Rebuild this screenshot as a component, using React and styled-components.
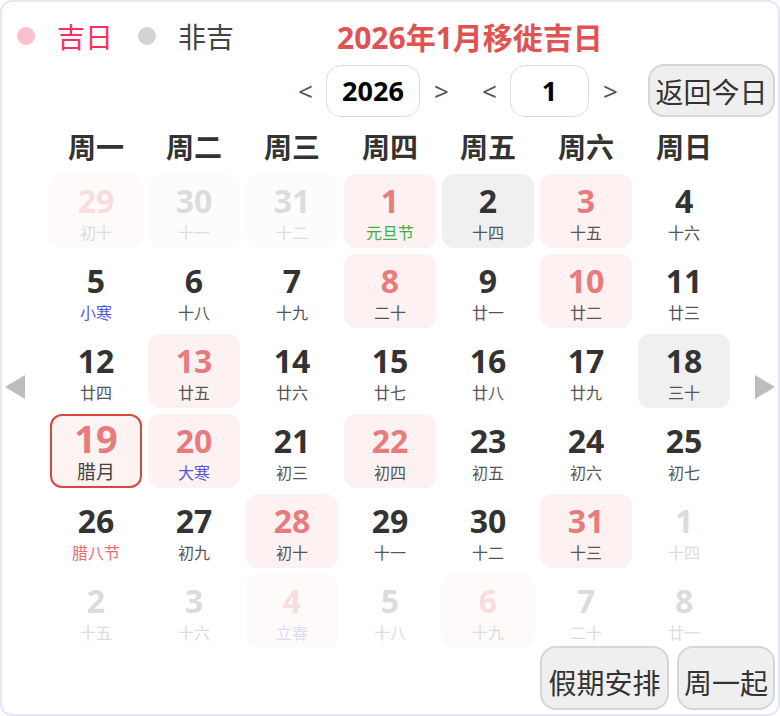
import styled, { createGlobalStyle } from "styled-components";

const GlobalStyle = createGlobalStyle`
  body {
    margin: 0;
    background: #fff;
    font-family: "Noto Sans", "Noto Sans CJK SC", sans-serif;
  }
`;

const prev = [
  { d: 29, l: "初十", kind: "lucky" },
  { d: 30, l: "十一", kind: "gray" },
  { d: 31, l: "十二", kind: "gray" },
];

const lucky = [1, 3, 8, 10, 13, 20, 22, 28, 31];
const gray = [2, 18];
const lunar = [
  "元旦节", "十四", "十五", "十六", "小寒", "十八", "十九", "二十", "廿一", "廿二",
  "廿三", "廿四", "廿五", "廿六", "廿七", "廿八", "廿九", "三十", "腊月", "大寒",
  "初三", "初四", "初五", "初六", "初七", "腊八节", "初九", "初十", "十一", "十二", "十三",
];
const tones = { 1: "green", 5: "blue", 20: "blue", 26: "red" };

const current = lunar.map((l, i) => {
  const d = i + 1;
  return {
    d,
    l,
    kind: lucky.includes(d) ? "lucky" : gray.includes(d) ? "gray" : "plain",
    tone: tones[d],
    today: d === 19,
  };
});

const next = [
  { d: 1, l: "十四" },
  { d: 2, l: "十五" },
  { d: 3, l: "十六" },
  { d: 4, l: "立春", kind: "lucky", tone: "blue" },
  { d: 5, l: "十八" },
  { d: 6, l: "十九", kind: "lucky" },
  { d: 7, l: "二十" },
  { d: 8, l: "廿一" },
];

const days = [
  ...prev.map((c) => ({ ...c, faded: true })),
  ...current,
  ...next.map((c) => ({ kind: "plain", ...c, faded: true })),
];

const weekdays = ["周一", "周二", "周三", "周四", "周五", "周六", "周日"];

const Frame = styled.div`
  width: 780px;
  height: 716px;
  box-sizing: border-box;
  border: 2px solid #e5e8f4;
  border-radius: 12px;
  overflow: hidden;
  display: flex;
  flex-direction: column;
`;

const TopBar = styled.div`
  height: 62px;
  box-sizing: border-box;
  padding: 6px 0 0 15px;
  display: flex;
  align-items: center;
`;

const Dot = styled.span`
  width: 18px;
  height: 18px;
  border-radius: 50%;
  background: ${(p) => p.$color};
  margin-right: 22px;
`;

const Legend = styled.span`
  font-size: 28px;
  color: ${(p) => p.$color};
  margin-right: 25px;
`;

const Title = styled.h1`
  margin: 0 0 0 78px;
  font-size: 30px;
  font-weight: 700;
  color: #e05353;
`;

const Controls = styled.div`
  height: 53px;
  display: flex;
  align-items: center;
  justify-content: flex-end;
  padding-right: 3px;
`;

const Chevron = styled.span`
  font-size: 26px;
  color: #555;
  width: 14px;
  text-align: center;
  margin: 0 ${(p) => p.$after || 14}px 0 0;
`;

const ValueBox = styled.div`
  width: ${(p) => p.$w}px;
  height: 52px;
  box-sizing: border-box;
  border: 1.5px solid #dcdde3;
  border-radius: 15px;
  display: flex;
  align-items: center;
  justify-content: center;
  font-size: 27px;
  font-weight: 700;
  color: #000;
  margin-right: 14px;
`;

const GreyButton = styled.button`
  height: ${(p) => p.$h || 53}px;
  box-sizing: border-box;
  padding: 0 4px;
  border: 2px solid #d6d6d6;
  border-radius: 16px;
  background: #efefef;
  font-family: "Noto Sans", "Noto Sans CJK SC", sans-serif;
  font-size: 28px;
  color: #333;
  display: flex;
  align-items: ${(p) => (p.$low ? "flex-end" : "center")};
  justify-content: center;
  padding-bottom: ${(p) => (p.$low ? "6px" : "0")};
`;

const Body = styled.div`
  display: flex;
  align-items: center;
  margin-top: 9px;
`;

const Side = styled.div`
  width: 48px;
  display: flex;
  justify-content: ${(p) => (p.$right ? "flex-end" : "flex-start")};
  padding: 0 3px;
  box-sizing: border-box;
`;

const Triangle = styled.span`
  width: 0;
  height: 0;
  border-top: 12px solid transparent;
  border-bottom: 12px solid transparent;
  ${(p) => (p.$right ? "border-left" : "border-right")}: 20px solid #bdbdbd;
`;

const Center = styled.div`
  width: 681px;
`;

const Week = styled.div`
  display: grid;
  grid-template-columns: repeat(7, 1fr);
  column-gap: 6px;
  height: 40px;
  align-items: center;
  margin-bottom: 8px;
`;

const WeekLabel = styled.div`
  text-align: center;
  font-size: 28px;
  font-weight: 700;
  color: #333;
`;

const Grid = styled.div`
  display: grid;
  grid-template-columns: repeat(7, 1fr);
  grid-auto-rows: 74px;
  gap: 6px;
`;

const bgFor = (kind, faded) => {
  if (kind === "lucky") return faded ? "#fefaf9" : "#fdf2f1";
  if (kind === "gray") return faded ? "#fcfcfc" : "#f0f0f0";
  return "transparent";
};

const numFor = (kind, faded, today) => {
  if (kind === "lucky" || today) return faded ? "#f9dcdc" : "#e87b7b";
  return faded ? "#dcdcdc" : "#333";
};

const toneColors = {
  green: "#3fae45",
  blue: "#5656e0",
  red: "#ea6d6d",
};

const Cell = styled.div`
  box-sizing: border-box;
  border-radius: 12px;
  background: ${(p) => (p.$today ? "#fdf3f2" : bgFor(p.$kind, p.$faded))};
  border: ${(p) => (p.$today ? "2px solid #d8463c" : "none")};
  display: flex;
  flex-direction: column;
  align-items: center;
  padding-top: ${(p) => (p.$today ? "0" : "6px")};
`;

const Num = styled.div`
  font-size: ${(p) => (p.$today ? 38 : 32)}px;
  font-weight: 700;
  line-height: ${(p) => (p.$today ? 44 : 42)}px;
  color: ${(p) => numFor(p.$kind, p.$faded, p.$today)};
`;

const Lunar = styled.div`
  font-size: ${(p) => (p.$today ? 19 : 16)}px;
  line-height: ${(p) => (p.$today ? 24 : 22)}px;
  color: ${(p) => {
    if (p.$tone) return p.$faded ? "#dcdcf8" : toneColors[p.$tone];
    return p.$faded ? "#dcdcdc" : p.$today ? "#444" : "#555";
  }};
`;

const Footer = styled.div`
  display: flex;
  justify-content: flex-end;
  gap: 8px;
  padding-right: 3px;
  margin-top: -2px;
`;

export default function App() {
  return (
    <>
      <GlobalStyle />
      <Frame>
        <TopBar>
          <Dot $color="#ffc0cb" />
          <Legend $color="#ff2f5c">吉日</Legend>
          <Dot $color="#d3d3d3" />
          <Legend $color="#444">非吉</Legend>
          <Title>2026年1月移徙吉日</Title>
        </TopBar>
        <Controls>
          <Chevron>&lt;</Chevron>
          <ValueBox $w={94}>2026</ValueBox>
          <Chevron $after={34}>&gt;</Chevron>
          <Chevron>&lt;</Chevron>
          <ValueBox $w={79}>1</ValueBox>
          <Chevron $after={31}>&gt;</Chevron>
          <GreyButton style={{ width: 127 }}>返回今日</GreyButton>
        </Controls>
        <Body>
          <Side>
            <Triangle />
          </Side>
          <Center>
            <Week>
              {weekdays.map((w) => (
                <WeekLabel key={w}>{w}</WeekLabel>
              ))}
            </Week>
            <Grid>
              {days.map((c, i) => (
                <Cell key={i} $kind={c.kind} $faded={c.faded} $today={c.today}>
                  <Num $kind={c.kind} $faded={c.faded} $today={c.today}>
                    {c.d}
                  </Num>
                  <Lunar $tone={c.tone} $faded={c.faded} $today={c.today}>
                    {c.l}
                  </Lunar>
                </Cell>
              ))}
            </Grid>
          </Center>
          <Side $right>
            <Triangle $right />
          </Side>
        </Body>
        <Footer>
          <GreyButton $h={64} $low style={{ width: 129 }}>
            假期安排
          </GreyButton>
          <GreyButton $h={64} $low style={{ width: 98 }}>
            周一起
          </GreyButton>
        </Footer>
      </Frame>
    </>
  );
}
